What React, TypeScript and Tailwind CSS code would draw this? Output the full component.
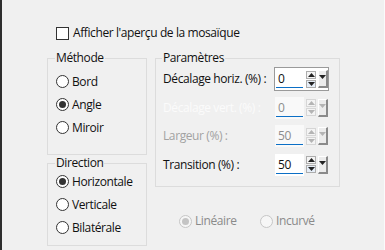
import { type ReactNode } from "react";

const ui = "font-['Open_Sans',sans-serif] text-[12px] leading-[16px] tracking-[-0.4px]";

function Check({ label }: { label: ReactNode }) {
  return (
    <label className="flex h-[16px] items-center gap-[4px]">
      <span className="size-[13px] border border-[#333] bg-white" />
      <span className="text-[#111]">{label}</span>
    </label>
  );
}

function Radio({
  label,
  checked,
  disabled,
}: {
  label: ReactNode;
  checked?: boolean;
  disabled?: boolean;
}) {
  return (
    <label className="flex h-[23px] items-center gap-[3px]">
      <span
        className={
          disabled
            ? "flex size-[13px] items-center justify-center rounded-full border border-[#c6c6c6] bg-[#f6f6f6]"
            : "flex size-[13px] items-center justify-center rounded-full border border-[#333] bg-white"
        }
      >
        {checked && (
          <span
            className={
              disabled
                ? "size-[7px] rounded-full bg-[#c4c4c4]"
                : "size-[7px] rounded-full bg-[#333]"
            }
          />
        )}
      </span>
      <span className={disabled ? "text-[#8a8a8a]" : "text-[#111]"}>{label}</span>
    </label>
  );
}

function Arrow({ up, color }: { up?: boolean; color: string }) {
  return (
    <svg width="7" height="4" viewBox="0 0 7 4">
      <path d={up ? "M0 4 L3.5 0 L7 4 Z" : "M0 0 L7 0 L3.5 4 Z"} fill={color} />
    </svg>
  );
}

function Spin({
  value,
  state,
}: {
  value: string;
  state: "focus" | "normal" | "off";
}) {
  const off = state === "off";
  const arrow = off ? "#b4b4b4" : "#222";
  return (
    <div
      className={
        state === "focus"
          ? "flex h-[24px] w-[55px] shrink-0 items-stretch border border-[#9a9a9a] bg-white"
          : "flex h-[24px] w-[55px] shrink-0 items-stretch border border-transparent bg-[#f0f0f0]"
      }
    >
      <div className={off ? "flex w-[29px] flex-col bg-[#f9f9f9]" : "flex w-[29px] flex-col bg-white"}>
        <span className={off ? "flex-1 pl-[3px] pt-[3px] text-[#8c8c8c]" : "flex-1 pl-[3px] pt-[3px] text-[#111]"}>
          {value}
        </span>
        <span className="mx-px mb-[2px] h-[2px] bg-[#0b6fc6]" />
      </div>
      <div className="ml-[2px] flex w-[10px] flex-col justify-center gap-px py-[2px]">
        <span className={off ? "flex h-[8px] items-center justify-center border border-[#d6d6d6] bg-[#f4f4f4]" : "flex h-[8px] items-center justify-center border border-[#adadad] bg-[#f4f4f4]"}>
          <Arrow up color={arrow} />
        </span>
        <span className={off ? "flex h-[8px] items-center justify-center border border-[#d6d6d6] bg-[#f4f4f4]" : "flex h-[8px] items-center justify-center border border-[#adadad] bg-[#e6eef8]"}>
          <Arrow color={arrow} />
        </span>
      </div>
      <div className="ml-[2px] my-[2px] flex w-[10px] items-start justify-center border-t border-l border-r-2 border-b-2 border-t-white border-l-white border-r-[#8a8a8a] border-b-[#8a8a8a] bg-[#ececec] pt-[4px]">
        <Arrow color={off ? "#b4b4b4" : "#222"} />
      </div>
    </div>
  );
}

function Field({
  label,
  tone,
  children,
}: {
  label: ReactNode;
  tone: "on" | "ghost" | "gray";
  children: ReactNode;
}) {
  const color =
    tone === "on" ? "text-[#111]" : tone === "ghost" ? "text-[#fbfbfb]" : "text-[#a2a2a2]";
  return (
    <div className="flex h-[22px] items-center">
      <span className={"w-[111px] shrink-0 whitespace-nowrap " + color}>{label}</span>
      {children}
    </div>
  );
}

export default function App() {
  return (
    <div className={"h-[250px] w-[385px] overflow-hidden border-l-2 border-r border-[#2e2e2e] border-r-[#fafafa] bg-[#f0f0f0] " + ui}>
      <div className="ml-[54px] mt-[25px]">
        <Check label="Afficher l'aperçu de la mosaïque" />
      </div>

      <div className="ml-[45px] mt-[9px] flex items-start">
        {/* Left column */}
        <div className="flex w-[100px] flex-col">
          <fieldset className="border border-[#dcdcdc] px-[8px] pb-[15px] pt-[4px]">
            <legend className="-ml-px px-px text-[#111]">Méthode</legend>
            <Radio label="Bord" />
            <Radio label="Angle" checked />
            <Radio label="Miroir" />
          </fieldset>

          <fieldset className="border border-[#dcdcdc] px-[8px] pb-[6px]">
            <legend className="-ml-px px-px text-[#111]">Direction</legend>
            <div className="-mt-px flex flex-col">
              <Radio label="Horizontale" checked />
              <Radio label="Verticale" />
              <Radio label="Bilatérale" />
            </div>
          </fieldset>
        </div>

        {/* Right column */}
        <div className="ml-[8px] flex w-[185px] flex-col">
          <fieldset className="flex flex-col gap-[6.5px] border border-[#dcdcdc] px-[7px] pb-[10px] pt-[2px]">
            <legend className="-ml-px px-px text-[#111]">Paramètres</legend>
            <Field label="Décalage horiz. (%) :" tone="on">
              <Spin value="0" state="focus" />
            </Field>
            <Field label="Décalage vert. (%) :" tone="ghost">
              <Spin value="0" state="off" />
            </Field>
            <Field label="Largeur (%) :" tone="gray">
              <Spin value="50" state="off" />
            </Field>
            <Field label="Transition (%) :" tone="on">
              <Spin value="50" state="normal" />
            </Field>
          </fieldset>

          <div className="ml-[24px] mt-[23px] flex">
            <div className="w-[81px]">
              <Radio label="Linéaire" checked disabled />
            </div>
            <Radio label="Incurvé" disabled />
          </div>
        </div>
      </div>
    </div>
  );
}
